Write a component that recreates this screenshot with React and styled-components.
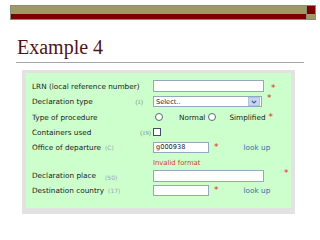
import React from "react";
import styled, { createGlobalStyle } from "styled-components";

const Global = createGlobalStyle`
  html, body { margin: 0; padding: 0; background: #ffffff; }
  body { width: 320px; height: 240px; overflow: hidden; }
`;

const Slide = styled.div`
  width: 320px;
  height: 240px;
  padding-top: 5px;
  box-sizing: border-box;
  font-family: "DejaVu Sans", Verdana, sans-serif;
`;

const TopBar = styled.div`
  margin-left: 10px;
  width: 304px;
  height: 13px;
  border: 1px solid #8c8c78;
  display: flex;
`;

const BarMain = styled.div`
  flex: 1;
  display: flex;
  flex-direction: column;
`;

const BarEnd = styled.div`
  width: 8px;
  display: flex;
  flex-direction: column;
  border-left: 1px solid #8c8c78;
`;

const Stripe = styled.div`
  height: ${(p) => p.$h}px;
  background: ${(p) => p.$c};
`;

const Title = styled.h1`
  margin: 15px 0 0 17px;
  font-family: "Liberation Serif", "Times New Roman", serif;
  font-weight: normal;
  font-size: 20px;
  line-height: 24px;
  color: #4e1416;
`;

const Rule = styled.div`
  margin: 3px 0 0 16px;
  width: 288px;
  height: 1px;
  background: #a4a4a4;
`;

const Panel = styled.div`
  margin: 7px 0 0 22px;
  width: 273px;
  box-sizing: border-box;
  background: #e2e2e2;
  padding: 3px 4px 6px 4px;
`;

const Form = styled.div`
  height: 135px;
  box-sizing: border-box;
  background: #ccffcc;
  padding: 5px 0 0 6px;
  display: flex;
  flex-direction: column;
`;

const Row = styled.div`
  display: flex;
  align-items: center;
  height: ${(p) => p.$h}px;
`;

const LabelCell = styled.div`
  width: 121px;
  height: 100%;
  display: flex;
  align-items: center;
  font-size: 7.3px;
  color: #222;
  white-space: nowrap;
`;

const Hint = styled.span`
  font-family: ${(p) => (p.$serif ? '"Liberation Serif", serif' : '"DejaVu Sans", sans-serif')};
  font-size: ${(p) => (p.$serif ? 6.5 : 6)}px;
  color: ${(p) => (p.$serif ? "#8a8a8a" : "#9aa6b0")};
  margin-left: ${(p) => (p.$push ? "auto" : `${p.$gap || 4}px`)};
  margin-right: ${(p) => p.$right || 0}px;
  align-self: ${(p) => (p.$low ? "flex-end" : "center")};
  padding-bottom: ${(p) => (p.$low ? 1 : 0)}px;
`;

const Field = styled.div`
  flex: 1;
  height: 100%;
  display: flex;
  align-items: center;
`;

const TextInput = styled.div`
  width: ${(p) => p.$w}px;
  height: ${(p) => p.$h}px;
  box-sizing: border-box;
  border: 1px solid #94a8bc;
  background: #ffffff;
  font-size: 6.6px;
  line-height: ${(p) => p.$h - 2}px;
  padding-left: 2px;
  color: #222;
`;

const Select = styled.div`
  width: 109px;
  height: 11px;
  box-sizing: border-box;
  border: 1px solid #94a8bc;
  background: #fff;
  display: flex;
  align-items: center;
  justify-content: space-between;
  padding: 0 1px 0 2px;
  font-size: 6.6px;
  color: #222;
`;

const DropBtn = styled.div`
  width: 10px;
  height: 7px;
  background: #c6d6ee;
  border: 1px solid #b0c4e0;
  display: flex;
  align-items: center;
  justify-content: center;
`;

const Star = styled.span`
  color: #e02828;
  font-size: 9px;
  line-height: 9px;
  margin-left: ${(p) => p.$gap}px;
  align-self: ${(p) => p.$align || "center"};
  padding-top: ${(p) => p.$top || 0}px;
`;

const Lookup = styled.span`
  color: #3a6eaa;
  font-size: 7.3px;
  margin-left: ${(p) => p.$gap}px;
`;

const Radio = styled.span`
  width: 6px;
  height: 6px;
  border-radius: 50%;
  border: 1px solid #5a6a7a;
  background: #fff;
  margin-left: ${(p) => p.$gap}px;
`;

const Check = styled.span`
  width: 6px;
  height: 6px;
  border: 1px solid #405060;
  background: #fff;
`;

const OptText = styled.span`
  font-size: 7.3px;
  color: #222;
  margin-left: ${(p) => p.$gap}px;
`;

const ErrorText = styled.span`
  font-size: 6.8px;
  color: #d43a2a;
`;

export default function App() {
  return (
    <>
      <Global />
      <Slide>
        <TopBar>
          <BarMain>
            <Stripe $h={8} $c="#9d9b63" />
            <Stripe $h={5} $c="#7c0000" />
          </BarMain>
          <BarEnd>
            <Stripe $h={8} $c="#7c0000" />
            <Stripe $h={5} $c="#9d9b63" />
          </BarEnd>
        </TopBar>
        <Title>Example 4</Title>
        <Rule />
        <Panel>
          <Form>
            <Row $h={16}>
              <LabelCell>LRN (local reference number)</LabelCell>
              <Field>
                <TextInput $w={111} $h={12} />
                <Star $gap={7} $top={4}>*</Star>
              </Field>
            </Row>
            <Row $h={15}>
              <LabelCell>
                Declaration type
                <Hint $serif $push $right={10}>(1)</Hint>
              </LabelCell>
              <Field>
                <Select>
                  Select..
                  <DropBtn>
                    <svg width="6" height="4" viewBox="0 0 6 4">
                      <path d="M0.8 0.8 L3 3 L5.2 0.8" fill="none" stroke="#3a5a9a" strokeWidth="1.2" />
                    </svg>
                  </DropBtn>
                </Select>
                <Star $gap={5} $align="flex-start">*</Star>
              </Field>
            </Row>
            <Row $h={16}>
              <LabelCell>Type of procedure</LabelCell>
              <Field>
                <Radio $gap={2} />
                <OptText $gap={16}>Normal</OptText>
                <Radio $gap={3} />
                <OptText $gap={13}>Simplified</OptText>
                <Star $gap={3}>*</Star>
              </Field>
            </Row>
            <Row $h={14}>
              <LabelCell>
                Containers used
                <Hint $serif $push $right={2}>(19)</Hint>
              </LabelCell>
              <Field>
                <Check />
              </Field>
            </Row>
            <Row $h={17}>
              <LabelCell>
                Office of departure
                <Hint>(C)</Hint>
              </LabelCell>
              <Field>
                <TextInput $w={56} $h={11}>g000938</TextInput>
                <Star $gap={5}>*</Star>
                <Lookup $gap={25}>look up</Lookup>
              </Field>
            </Row>
            <Row $h={13}>
              <LabelCell />
              <Field>
                <ErrorText>Invalid format</ErrorText>
              </Field>
            </Row>
            <Row $h={13}>
              <LabelCell>
                Declaration place
                <Hint $low $gap={9}>(50)</Hint>
              </LabelCell>
              <Field>
                <TextInput $w={111} $h={12} />
                <Star $gap={20} $align="flex-start">*</Star>
              </Field>
            </Row>
            <Row $h={16}>
              <LabelCell>
                Destination country
                <Hint>(17)</Hint>
              </LabelCell>
              <Field>
                <TextInput $w={56} $h={11} />
                <Star $gap={5}>*</Star>
                <Lookup $gap={25}>look up</Lookup>
              </Field>
            </Row>
          </Form>
        </Panel>
      </Slide>
    </>
  );
}
